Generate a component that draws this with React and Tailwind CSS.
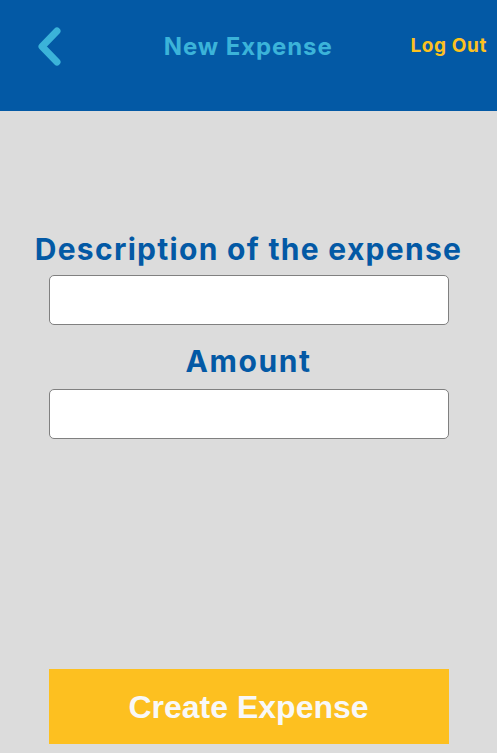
import React, { useState } from 'react'

const font = { fontFamily: 'Inter, "Noto Sans", sans-serif' }

const App = () => {
  const [description, setDescription] = useState('')
  const [amount, setAmount] = useState('')

  return (
    <div className="min-h-screen flex flex-col bg-[#dcdcdc]" style={font}>
      {/* Header */}
      <header className="h-[111px] bg-[#0359a5] flex items-start pt-[28px] px-[10px]">
        <div className="flex items-center w-full h-[37px]">
          <button className="w-[60px] h-[37px] flex items-center pl-[26px]">
            <svg width="30" height="40" viewBox="0 0 30 40" fill="none">
              <polyline
                points="21,4 6,19.5 21,35"
                stroke="#3bb3d9"
                strokeWidth="7"
                strokeLinecap="round"
                strokeLinejoin="round"
              />
            </svg>
          </button>
          <h1 className="flex-1 text-center text-[24px] font-bold tracking-[0.9px] text-[#3bb3d9] pl-[16px]">New Expense</h1>
          <button className="text-[19px] font-bold tracking-[0.6px] text-[#fcc120]">Log Out</button>
        </div>
      </header>

      {/* Form */}
      <main className="flex-1 flex flex-col items-center pt-[120px]">
        <label className="text-[30px] font-bold tracking-[1.3px] text-[#0359a5] leading-[36px]">Description of the expense</label>
        <input
          value={description}
          onChange={e => setDescription(e.target.value)}
          className="mt-[8px] w-[400px] h-[50px] bg-white border border-[#808080] rounded-[5px] px-3 outline-none"
        />
        <label className="mt-[18px] text-[30px] font-bold tracking-[1.6px] text-[#0359a5] leading-[36px]">Amount</label>
        <input
          value={amount}
          onChange={e => setAmount(e.target.value)}
          className="mt-[10px] w-[400px] h-[50px] bg-white border border-[#808080] rounded-[5px] px-3 outline-none"
        />
      </main>

      <div className="flex justify-center pb-[9px]">
        <button
          className="w-[400px] h-[75px] bg-[#fdc020] text-[#f8f8f8] text-[32px] font-bold"
          style={{ fontFamily: '"Liberation Sans", Arial, sans-serif' }}
        >
          Create Expense
        </button>
      </div>
    </div>
  )
}

export default App
